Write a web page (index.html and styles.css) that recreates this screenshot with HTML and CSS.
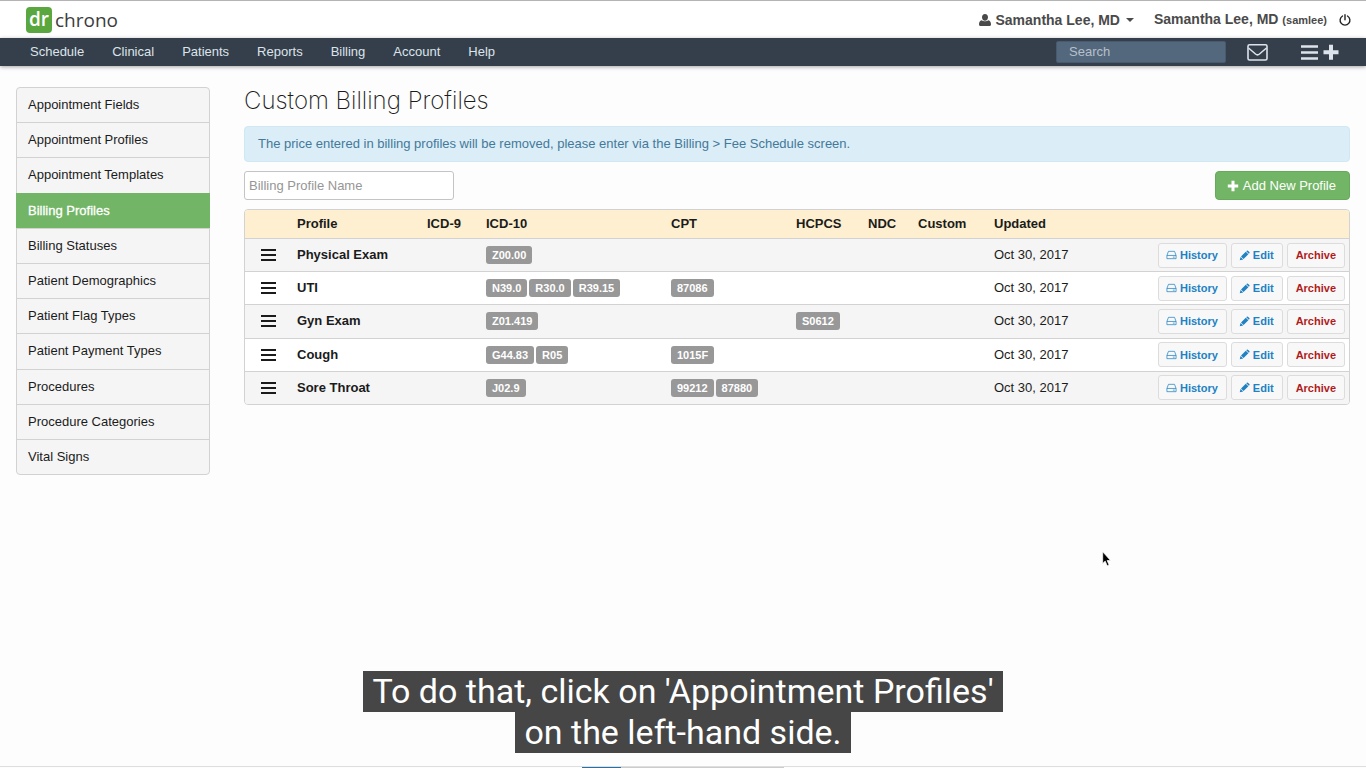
FILE: index.html
```html
<!DOCTYPE html>
<html lang="en">
<head>
    <meta charset="UTF-8">
    <meta name="viewport" content="width=device-width, initial-scale=1.0">
    <title>Custom Billing Profiles</title>
    <link rel="stylesheet" href="styles.css">
</head>
<body>
    <!-- shared icons -->
    <svg class="sprite" aria-hidden="true">
        <symbol id="icon-bars" viewBox="0 0 15 12">
            <path d="M0 1h15M0 6h15M0 11h15" stroke="currentColor" stroke-width="2"/>
        </symbol>
        <symbol id="icon-plus" viewBox="0 0 12 12">
            <path d="M4.500.8h3v3.700h3.700v3h-3.700v3.700h-3v-3.700h-3.700v-3h3.700z" fill="currentColor"/>
        </symbol>
        <symbol id="icon-drive" viewBox="0 0 12 10">
            <path d="M1 5.500L2.700 1h6.600L11 5.500V9H1V5.500h10M7.500 7.300h2" fill="none" stroke="currentColor" stroke-width=".8" stroke-linejoin="round"/>
        </symbol>
        <symbol id="icon-pencil" viewBox="0 0 12 12">
            <path d="M.8 11.200l.9-3.700 2.900 2.800zM2.200 7L7.400 1.800 10.200 4.600 5 9.800zM7.900 1.300l.6-.6q.6-.5 1.200 0l1.600 1.600q.5.6 0 1.200l-.6.6z" fill="currentColor"/>
        </symbol>
    </svg>

    <header class="topbar">
        <a href="#" class="logo"><span class="logo-mark">dr</span><span>chrono</span></a>
        <div class="account">
            <button type="button" class="user-menu">
                <svg width="12" height="12" viewBox="0 0 12 12"><path d="M6 0c1.900 0 3 1.300 3 3.200S7.800 6.700 6 6.700 3 5.100 3 3.200 4.100 0 6 0zM2.800 6.300C4 7.700 8 7.700 9.200 6.300 11.300 6.700 12 8.300 12 10.500c0 .9-.6 1.500-1.500 1.500h-9C.6 12 0 11.400 0 10.500 0 8.300.7 6.700 2.800 6.300z" fill="currentColor"/></svg>
                <span>Samantha Lee, MD</span>
                <span class="caret"></span>
            </button>
            <span class="signed-in">Samantha Lee, MD <small>(samlee)</small></span>
            <button type="button" class="power" aria-label="Log out">
                <svg width="12" height="12" viewBox="0 0 12 12"><path d="M6 .7v5M3.500 2A4.900 4.900 0 1 0 8.500 2" fill="none" stroke="currentColor" stroke-width="1.400" stroke-linecap="round"/></svg>
            </button>
        </div>
    </header>

    <nav class="navbar">
        <ul class="nav-links">
            <li><a href="#">Schedule</a></li>
            <li><a href="#">Clinical</a></li>
            <li><a href="#">Patients</a></li>
            <li><a href="#">Reports</a></li>
            <li><a href="#">Billing</a></li>
            <li><a href="#">Account</a></li>
            <li><a href="#">Help</a></li>
        </ul>
        <div class="nav-tools">
            <input type="search" class="nav-search" placeholder="Search" aria-label="Search">
            <button type="button" aria-label="Messages">
                <svg width="21" height="18" viewBox="0 0 21 18"><rect x="1" y="1.800" width="19" height="15.200" rx="1.500" fill="none" stroke="currentColor" stroke-width="1.600"/><path d="M1.500 5q4 3.400 7 6 2 1.700 4 0 3-2.600 7-6" fill="none" stroke="currentColor" stroke-width="1.500"/></svg>
            </button>
            <button type="button" aria-label="Quick add">
                <svg width="39" height="16" viewBox="0 0 39 16"><path d="M1 2.500h17M1 8.500h17M1 14.500h17" stroke="currentColor" stroke-width="2.600"/><path d="M31 .8v15M23.500 8.300h15" stroke="currentColor" stroke-width="4"/></svg>
            </button>
        </div>
    </nav>

    <div class="layout">
        <aside>
            <ul class="side-menu">
                <li><a href="#">Appointment Fields</a></li>
                <li><a href="#">Appointment Profiles</a></li>
                <li><a href="#">Appointment Templates</a></li>
                <li class="active"><a href="#">Billing Profiles</a></li>
                <li><a href="#">Billing Statuses</a></li>
                <li><a href="#">Patient Demographics</a></li>
                <li><a href="#">Patient Flag Types</a></li>
                <li><a href="#">Patient Payment Types</a></li>
                <li><a href="#">Procedures</a></li>
                <li><a href="#">Procedure Categories</a></li>
                <li><a href="#">Vital Signs</a></li>
            </ul>
        </aside>

        <main>
            <h1>Custom Billing Profiles</h1>
            <p class="alert">The price entered in billing profiles will be removed, please enter via the Billing &gt; Fee Schedule screen.</p>

            <div class="toolbar">
                <input type="text" class="filter" placeholder="Billing Profile Name" aria-label="Billing Profile Name">
                <button type="button" class="btn-add"><svg width="12" height="12"><use href="#icon-plus"/></svg>Add New Profile</button>
            </div>

            <table class="profiles">
                <colgroup>
                    <col class="col-handle"><col class="col-profile"><col class="col-icd9"><col class="col-icd10"><col class="col-cpt">
                    <col class="col-hcpcs"><col class="col-ndc"><col class="col-custom"><col>
                </colgroup>
                <thead>
                    <tr>
                        <th></th>
                        <th>Profile</th>
                        <th>ICD-9</th>
                        <th>ICD-10</th>
                        <th>CPT</th>
                        <th>HCPCS</th>
                        <th>NDC</th>
                        <th>Custom</th>
                        <th>Updated</th>
                    </tr>
                </thead>
                <tbody>
                    <tr>
                        <td><svg class="handle" width="15" height="12"><use href="#icon-bars"/></svg></td>
                        <th scope="row">Physical Exam</th>
                        <td></td>
                        <td><div class="codes"><span>Z00.00</span></div></td>
                        <td></td>
                        <td></td>
                        <td></td>
                        <td></td>
                        <td><div class="updated">Oct 30, 2017
                            <div class="actions">
                                <button type="button"><svg width="11" height="10"><use href="#icon-drive"/></svg>History</button>
                                <button type="button"><svg width="11" height="11"><use href="#icon-pencil"/></svg>Edit</button>
                                <button type="button" class="archive">Archive</button>
                            </div>
                        </div></td>
                    </tr>
                    <tr>
                        <td><svg class="handle" width="15" height="12"><use href="#icon-bars"/></svg></td>
                        <th scope="row">UTI</th>
                        <td></td>
                        <td><div class="codes"><span>N39.0</span><span>R30.0</span><span>R39.15</span></div></td>
                        <td><div class="codes"><span>87086</span></div></td>
                        <td></td>
                        <td></td>
                        <td></td>
                        <td><div class="updated">Oct 30, 2017
                            <div class="actions">
                                <button type="button"><svg width="11" height="10"><use href="#icon-drive"/></svg>History</button>
                                <button type="button"><svg width="11" height="11"><use href="#icon-pencil"/></svg>Edit</button>
                                <button type="button" class="archive">Archive</button>
                            </div>
                        </div></td>
                    </tr>
                    <tr>
                        <td><svg class="handle" width="15" height="12"><use href="#icon-bars"/></svg></td>
                        <th scope="row">Gyn Exam</th>
                        <td></td>
                        <td><div class="codes"><span>Z01.419</span></div></td>
                        <td></td>
                        <td><div class="codes"><span>S0612</span></div></td>
                        <td></td>
                        <td></td>
                        <td><div class="updated">Oct 30, 2017
                            <div class="actions">
                                <button type="button"><svg width="11" height="10"><use href="#icon-drive"/></svg>History</button>
                                <button type="button"><svg width="11" height="11"><use href="#icon-pencil"/></svg>Edit</button>
                                <button type="button" class="archive">Archive</button>
                            </div>
                        </div></td>
                    </tr>
                    <tr>
                        <td><svg class="handle" width="15" height="12"><use href="#icon-bars"/></svg></td>
                        <th scope="row">Cough</th>
                        <td></td>
                        <td><div class="codes"><span>G44.83</span><span>R05</span></div></td>
                        <td><div class="codes"><span>1015F</span></div></td>
                        <td></td>
                        <td></td>
                        <td></td>
                        <td><div class="updated">Oct 30, 2017
                            <div class="actions">
                                <button type="button"><svg width="11" height="10"><use href="#icon-drive"/></svg>History</button>
                                <button type="button"><svg width="11" height="11"><use href="#icon-pencil"/></svg>Edit</button>
                                <button type="button" class="archive">Archive</button>
                            </div>
                        </div></td>
                    </tr>
                    <tr>
                        <td><svg class="handle" width="15" height="12"><use href="#icon-bars"/></svg></td>
                        <th scope="row">Sore Throat</th>
                        <td></td>
                        <td><div class="codes"><span>J02.9</span></div></td>
                        <td><div class="codes"><span>99212</span><span>87880</span></div></td>
                        <td></td>
                        <td></td>
                        <td></td>
                        <td><div class="updated">Oct 30, 2017
                            <div class="actions">
                                <button type="button"><svg width="11" height="10"><use href="#icon-drive"/></svg>History</button>
                                <button type="button"><svg width="11" height="11"><use href="#icon-pencil"/></svg>Edit</button>
                                <button type="button" class="archive">Archive</button>
                            </div>
                        </div></td>
                    </tr>
                </tbody>
            </table>
        </main>
    </div>

    <svg class="cursor" width="9" height="16" viewBox="0 0 9 16"><path d="M.7.8v11.700l2.500-2.400 2 4.700 1.900-.8-2-4.500h3.400z" fill="#000" stroke="#fff" stroke-width=".7"/></svg>

    <div class="caption">
        <span>To do that, click on 'Appointment Profiles'</span>
        <span>on the left-hand side.</span>
    </div>

    <div class="bottom-edge"><div class="bottom-tab"></div></div>
</body>
</html>
```
FILE: styles.css
```css
:root {
    --navy: #343f4b;
    --green: #73b566;
    --border: #d2d2d2;
    --text: #1b1b1b;
    --stripe: #f5f5f5;
    --blue: #2081c3;
}

* {
    margin: 0;
    padding: 0;
    box-sizing: border-box;
}

body {
    font-family: "Liberation Sans", Arial, sans-serif;
    font-size: 13px;
    line-height: 18px;
    color: var(--text);
    background: #fdfdfd;
    min-height: 100vh;
}

a {
    color: inherit;
    text-decoration: none;
}

ul {
    list-style: none;
}

button,
input {
    font-family: inherit;
    font-size: inherit;
}

button {
    display: flex;
    align-items: center;
    border: none;
    background: none;
    color: inherit;
    cursor: pointer;
}

.sprite {
    display: none;
}

/* top bar */
.topbar {
    display: flex;
    justify-content: space-between;
    align-items: center;
    height: 38px;
    padding: 0 15px 0 26px;
    background: #fff;
    border-top: 1px solid #b4b4b4;
}

.logo {
    display: flex;
    align-items: center;
    gap: 3px;
    font-family: "Open Sans", sans-serif;
    font-size: 19px;
    line-height: 24px;
    color: #3c3c3c;
}

.logo-mark {
    width: 26px;
    height: 26px;
    border-radius: 4px;
    background: #5aa73f;
    color: #fff;
    font-weight: 600;
    text-align: center;
}

.account {
    display: flex;
    align-items: center;
    gap: 12px;
    font-size: 14px;
    font-weight: bold;
    color: #4a4a4a;
}

.account small {
    font-size: 11px;
}

.user-menu {
    gap: 5px;
    margin-right: 8px;
    font-weight: bold;
}

.caret {
    margin-left: 1px;
    border: 4px solid transparent;
    border-top-color: #4a4a4a;
    border-bottom: 0;
}

.power {
    color: #222;
}

/* main navigation */
.navbar {
    display: flex;
    justify-content: space-between;
    align-items: center;
    height: 28px;
    padding: 0 27px 0 30px;
    background: var(--navy);
    color: #dde3ea;
    box-shadow: 0 1px 4px rgba(0, 0, 0, 0.35);
}

.nav-links {
    display: flex;
    gap: 28px;
}

.nav-tools {
    display: flex;
    align-items: center;
    gap: 32px;
}

.nav-search {
    width: 170px;
    height: 22px;
    margin-right: -11px;
    padding: 0 12px 2px;
    border: 1px solid #485a6d;
    border-radius: 2px;
    background: #53677d;
    color: #fff;
}

.nav-search::placeholder {
    color: #b7c0ca;
}

/* page layout */
.layout {
    display: flex;
    align-items: flex-start;
    gap: 34px;
    padding: 21px 16px;
}

.side-menu {
    display: flex;
    flex-direction: column;
    width: 194px;
    min-height: 388px;
    border: 1px solid var(--border);
    border-radius: 4px;
    background: var(--stripe);
}

.side-menu li {
    display: flex;
    align-items: center;
    flex: 1;
    padding: 0 11px;
    border-top: 1px solid var(--border);
}

.side-menu li:first-child {
    border-top: none;
}

.side-menu .active {
    margin: 0 -1px;
    padding: 0 12px;
    background: var(--green);
    border-color: var(--green);
    color: #fff;
    -webkit-text-stroke: 0.3px #fff;
}

main {
    flex: 1;
}

h1 {
    margin-bottom: 11px;
    font-family: Inter, "Liberation Sans", sans-serif;
    font-size: 24px;
    line-height: 28px;
    font-weight: 200;
}

.alert {
    margin-bottom: 9px;
    padding: 8px 13px;
    border: 1px solid #d0e8f2;
    border-radius: 4px;
    background: #dbedf6;
    color: #43799b;
}

.toolbar {
    display: flex;
    justify-content: space-between;
    margin-bottom: 9px;
}

.filter {
    width: 210px;
    height: 29px;
    padding: 0 4px;
    border: 1px solid #c4c4c4;
    border-radius: 3px;
    background: #fff;
}

.filter::placeholder {
    color: #969696;
}

.btn-add {
    gap: 4px;
    height: 29px;
    padding: 0 13px 0 11px;
    border: 1px solid #68a95c;
    border-radius: 4px;
    background: var(--green);
    color: #fff;
}

/* profiles table */
.profiles {
    width: 100%;
    height: 196px;
    table-layout: fixed;
    border-collapse: separate;
    border-spacing: 0;
    border: 1px solid var(--border);
    border-radius: 4px;
    overflow: hidden;
}

.profiles th {
    text-align: left;
}

.profiles thead th {
    height: 28px;
    background: #fdefcf;
}

.profiles tbody th,
.profiles tbody td {
    border-top: 1px solid var(--border);
}

.profiles tbody tr:nth-child(odd) {
    background: var(--stripe);
}

.profiles tbody tr:nth-child(even) {
    background: #fff;
}

.col-handle { width: 52px; }
.col-profile { width: 130px; }
.col-icd9 { width: 59px; }
.col-icd10 { width: 185px; }
.col-cpt { width: 125px; }
.col-hcpcs { width: 72px; }
.col-ndc { width: 50px; }
.col-custom { width: 76px; }

.handle {
    display: block;
    margin-left: 16px;
}

.codes {
    display: flex;
    gap: 2px;
}

.codes span {
    padding: 0 6px;
    border-radius: 3px;
    background: #989898;
    color: #fff;
    font-size: 11px;
    font-weight: bold;
}

.updated {
    display: flex;
    justify-content: space-between;
    align-items: center;
    padding-right: 4px;
}

.actions {
    display: flex;
    gap: 4px;
}

.actions button {
    gap: 3px;
    height: 25px;
    padding: 0 8px 0 7px;
    border: 1px solid #dcdcdc;
    border-radius: 3px;
    background: #f8f8f8;
    color: var(--blue);
    font-size: 11px;
    font-weight: bold;
}

.actions .archive {
    padding: 0 8px;
    color: #b01c1c;
}

/* overlays */
.cursor {
    position: absolute;
    left: 1102px;
    top: 551px;
}

.caption {
    position: fixed;
    left: 0;
    right: 0;
    bottom: 15px;
    display: flex;
    flex-direction: column;
    align-items: center;
    font-family: Roboto, sans-serif;
    font-size: 34px;
    line-height: 41px;
    color: #fff;
}

.caption span {
    padding: 0 9px;
    background: #464646;
}

.bottom-edge {
    position: fixed;
    left: 0;
    right: 0;
    bottom: 0;
    border-top: 1px solid #dedede;
}

.bottom-tab {
    width: 202px;
    height: 1px;
    margin: 0 auto;
    background: linear-gradient(to right, #2a6fa3 39px, #ccc 39px);
}
```
